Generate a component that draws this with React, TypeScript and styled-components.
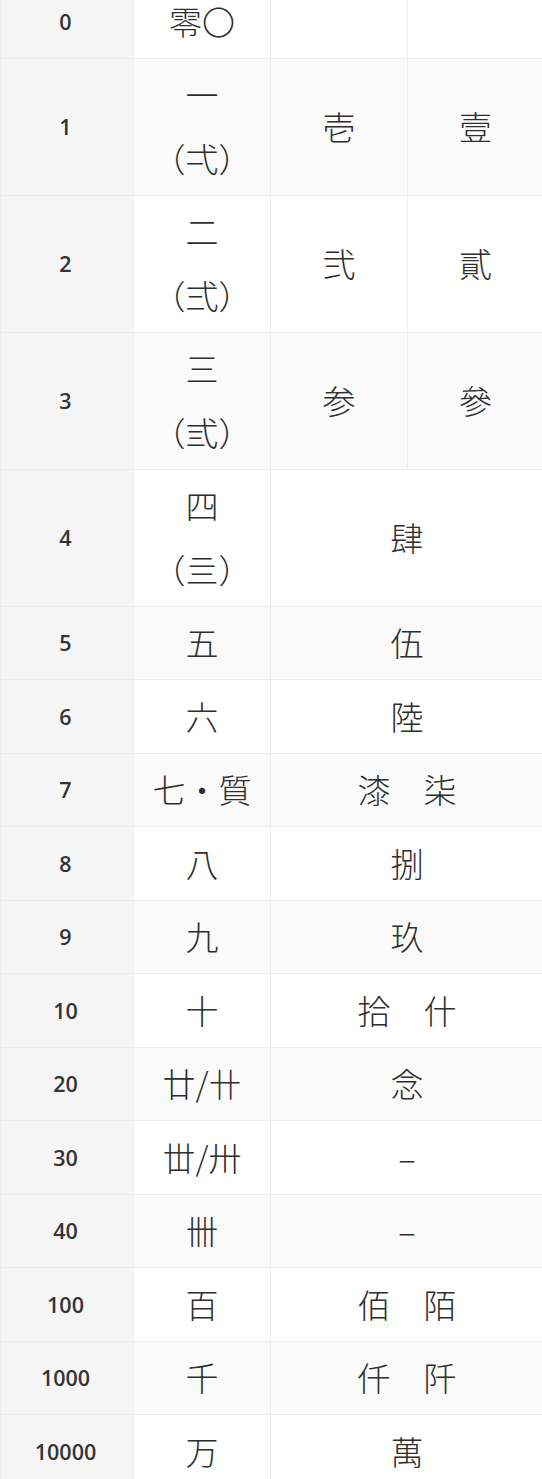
import React from 'react';
import styled, { createGlobalStyle } from 'styled-components';

const GlobalStyle = createGlobalStyle`
    html, body {
        margin: 0;
        padding: 0;
        background: #ffffff;
    }
    body {
        overflow: hidden;
    }
`;

const Page = styled.div`
    width: 542px;
    height: 1479px;
    overflow: hidden;
`;

const Table = styled.table`
    width: 543px;
    margin-top: -16px;
    border-collapse: collapse;
    table-layout: fixed;
    color: #2e2e2e;
    font-family: "Noto Sans CJK JP", "Noto Sans", sans-serif;
`;

const Row = styled.tr<{ $striped: boolean }>`
    background: ${(p) => (p.$striped ? '#fafafa' : '#ffffff')};
`;

const NumCell = styled.th`
    background: #f5f5f5;
    border: 1px solid #ededed;
    padding: 4.5px 3px 4.5px 0;
    line-height: 63.5px;
    font-family: "Open Sans", "Noto Sans", sans-serif;
    font-weight: 600;
    font-size: 21.5px;
    color: #333333;
    text-align: center;
`;

const Cell = styled.td`
    border: 1px solid #ededed;
    padding: 4.5px 0;
    line-height: 63.5px;
    font-size: 33px;
    font-weight: 300;
    text-align: center;
    white-space: nowrap;
`;

type Entry = {
    num: string;
    basic: string[];
    formal: string[];
};

const entries: Entry[] = [
    { num: '0', basic: ['零〇'], formal: ['', ''] },
    { num: '1', basic: ['一', '（弌）'], formal: ['壱', '壹'] },
    { num: '2', basic: ['二', '（弍）'], formal: ['弐', '貳'] },
    { num: '3', basic: ['三', '（弎）'], formal: ['参', '參'] },
    { num: '4', basic: ['四', '（亖）'], formal: ['肆'] },
    { num: '5', basic: ['五'], formal: ['伍'] },
    { num: '6', basic: ['六'], formal: ['陸'] },
    { num: '7', basic: ['七・質'], formal: ['漆\u3000柒'] },
    { num: '8', basic: ['八'], formal: ['捌'] },
    { num: '9', basic: ['九'], formal: ['玖'] },
    { num: '10', basic: ['十'], formal: ['拾\u3000什'] },
    { num: '20', basic: ['廿/卄'], formal: ['念'] },
    { num: '30', basic: ['丗/卅'], formal: ['–'] },
    { num: '40', basic: ['卌'], formal: ['–'] },
    { num: '100', basic: ['百'], formal: ['佰\u3000陌'] },
    { num: '1000', basic: ['千'], formal: ['仟\u3000阡'] },
    { num: '10000', basic: ['万'], formal: ['萬'] },
];

export default function App(): JSX.Element {
    return (
        <>
            <GlobalStyle />
            <Page>
                <Table>
                    <colgroup>
                        <col style={{ width: 133 }} />
                        <col style={{ width: 137 }} />
                        <col style={{ width: 137 }} />
                        <col style={{ width: 136 }} />
                    </colgroup>
                    <tbody>
                        {entries.map((e, i) => (
                            <Row key={e.num} $striped={i % 2 === 1}>
                                <NumCell>{e.num}</NumCell>
                                <Cell>
                                    {e.basic.map((b, j) => (
                                        <React.Fragment key={j}>
                                            {j > 0 && <br />}
                                            {b}
                                        </React.Fragment>
                                    ))}
                                </Cell>
                                {e.formal.length === 2 ? (
                                    <>
                                        <Cell>{e.formal[0]}</Cell>
                                        <Cell>{e.formal[1]}</Cell>
                                    </>
                                ) : (
                                    <Cell colSpan={2}>{e.formal[0]}</Cell>
                                )}
                            </Row>
                        ))}
                    </tbody>
                </Table>
            </Page>
        </>
    );
}
